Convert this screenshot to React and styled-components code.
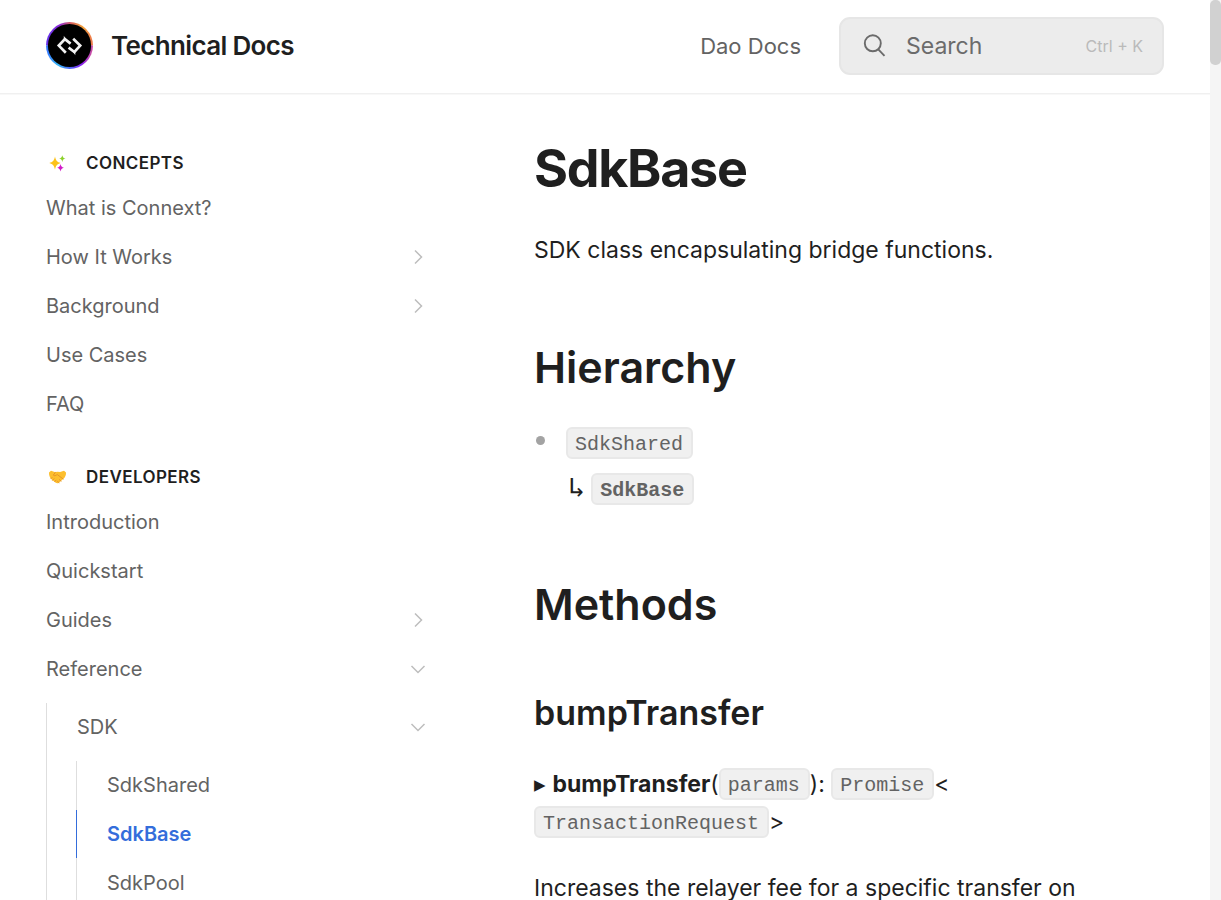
import React from "react";
import styled, { createGlobalStyle } from "styled-components";

const GlobalStyle = createGlobalStyle`
  *, *::before, *::after { box-sizing: border-box; }
  body {
    margin: 0;
    background: #fff;
    color: #1f1f1f;
    font-family: Inter, "Liberation Sans", sans-serif;
    font-size: 23px;
    line-height: 38px;
  }
  h1, h2, h3, p, ul { margin: 0; padding: 0; }
  a { color: inherit; text-decoration: none; }
`;

const Shell = styled.div`
  display: flex;
  height: 100vh;
`;

const Scroller = styled.div`
  flex: 1;
  min-width: 0;
  overflow-y: auto;
  scrollbar-width: none;
`;

const ScrollTrack = styled.div`
  width: 11px;
  background: #f5f5f5;
`;

const ScrollThumb = styled.div`
  height: 65px;
  border-radius: 5px;
  background: #d1d1d1;
`;

const Header = styled.header`
  display: flex;
  align-items: center;
  height: 94px;
  padding: 0 46px 2px;
  border-bottom: 1px solid #f0f0f0;
  box-shadow: 0 1px 0 #f8f8f8;
`;

const Brand = styled.a`
  display: flex;
  align-items: center;
  gap: 18px;
  flex: 1;
  font-size: 26px;
  font-weight: 600;
  letter-spacing: -0.025em;
`;

const LogoMark = styled.svg`
  width: 47px;
  height: 47px;
`;

const HeaderLink = styled.a`
  margin-right: 38px;
  color: #636363;
  font-size: 22px;
`;

const SearchButton = styled.button`
  display: flex;
  align-items: center;
  gap: 20px;
  width: 325px;
  height: 58px;
  padding: 0 19px 0 22px;
  border: 2px solid #e6e6e6;
  border-radius: 11px;
  background: #ececec;
  color: #6b6b6b;
  font: inherit;
  text-align: left;
`;

const SearchLabel = styled.span`
  flex: 1;
`;

const Shortcut = styled.span`
  color: #bababa;
  font-size: 16px;
`;

const Columns = styled.div`
  display: grid;
  grid-template-columns: 384px minmax(0, 1fr);
  column-gap: 104px;
  padding: 0 46px;
`;

const Sidebar = styled.nav`
  display: flex;
  flex-direction: column;
  gap: 28px;
  padding-top: 48px;
  font-size: 20px;
  line-height: 30px;
  color: #636363;
`;

const GroupTitle = styled.h2`
  display: flex;
  align-items: center;
  gap: 17px;
  height: 42px;
  padding-left: 1px;
  color: #1f1f1f;
  font-size: 17px;
  font-weight: 600;
  letter-spacing: 0.025em;
  text-transform: uppercase;
`;

const GroupIcon = styled.svg`
  width: 22px;
  height: 22px;
`;

const NavList = styled.ul`
  display: flex;
  flex-direction: column;
  gap: 1px;
  list-style: none;
`;

const SubList = styled(NavList)`
  margin-top: 10px;
  border-left: 1px solid #dedede;
`;

const NavLink = styled.a`
  display: flex;
  align-items: center;
  justify-content: space-between;
  height: 48px;
  padding-right: 3px;
  padding-left: ${(p) => (p.$nested ? 30 : 0)}px;
  margin-left: ${(p) => (p.$nested ? -1 : 0)}px;
  border-left: ${(p) => (p.$nested ? "1px solid transparent" : "none")};
  ${(p) => p.$active && "color: #346ddb; border-left-color: #346ddb; font-weight: 600;"}
`;

const NestedItem = styled.li`
  ${SubList} { margin-left: 29px; }
`;

const ChevronIcon = styled.svg`
  width: 18px;
  height: 18px;
  fill: none;
  stroke: #bdbdbd;
  stroke-width: 1.5;
  transform: ${(p) => (p.$open ? "rotate(90deg)" : "none")};
`;

const Article = styled.main`
  padding-top: 42px;
`;

const Title = styled.h1`
  font-size: 52px;
  font-weight: 700;
  line-height: 66px;
  letter-spacing: -0.025em;
`;

const Lead = styled.p`
  margin: 29px 0 69px;
`;

const SectionTitle = styled.h2`
  font-size: 43px;
  font-weight: 600;
  line-height: 58px;
`;

const MemberTitle = styled.h3`
  margin-top: 57px;
  font-size: 34px;
  font-weight: 600;
  line-height: 46px;
`;

const Tree = styled.ul`
  margin: 28px 0 67px;
  list-style: none;
`;

const TreeItem = styled.li`
  display: flex;
  gap: 20px;
`;

const Bullet = styled.span`
  width: 9px;
  height: 9px;
  margin: 12px 1px 0 2px;
  border-radius: 50%;
  background: #a3a3a3;
`;

const TreeBody = styled.div`
  display: flex;
  flex-direction: column;
  gap: 8px;
`;

const Branch = styled.span`
  margin-left: 2px;
  font-family: "DejaVu Sans Mono", monospace;
  font-size: 28px;
  line-height: 28px;
`;

const Code = styled.code`
  display: inline-block;
  padding: 3px 8px 0 7px;
  border: 2px solid #e8e8e8;
  border-radius: 6px;
  background: #f0f0f0;
  color: #636363;
  font-family: "Liberation Mono", monospace;
  font-size: 20px;
  line-height: 25px;
  vertical-align: 1px;
`;

const Signature = styled.p`
  margin-top: 29px;
`;

const Paragraph = styled.p`
  margin-top: 28px;
`;

function Chevron({ open }) {
  return (
    <ChevronIcon viewBox="0 0 18 18" $open={open} aria-hidden="true">
      <path d="M6 2.500 12.500 9 6 15.500" />
    </ChevronIcon>
  );
}

function Logo() {
  return (
    <LogoMark viewBox="0 0 47 47" aria-hidden="true">
      <defs>
        <linearGradient id="ringTop" x1="0" y1="0.4" x2="1" y2="0.5">
          <stop offset="0" stopColor="#5a35f0" />
          <stop offset="0.25" stopColor="#8d2bd8" />
          <stop offset="0.5" stopColor="#d8605a" />
          <stop offset="0.75" stopColor="#f2a23c" />
          <stop offset="1" stopColor="#ee7a4a" />
        </linearGradient>
        <linearGradient id="ringBottom" x1="0" y1="0.4" x2="1" y2="0.5">
          <stop offset="0" stopColor="#3577ff" />
          <stop offset="0.3" stopColor="#38b6f5" />
          <stop offset="0.55" stopColor="#4a6cf5" />
          <stop offset="0.8" stopColor="#8a22ee" />
          <stop offset="1" stopColor="#e0608a" />
        </linearGradient>
      </defs>
      <path d="M0 23.500a23.500 23.500 0 0 1 47 0z" fill="url(#ringTop)" />
      <path d="M0 23.500a23.500 23.500 0 0 0 47 0z" fill="url(#ringBottom)" />
      <circle cx="23.500" cy="23.500" r="21.600" fill="#000" />
      <g fill="none" stroke="#f2f2f2" strokeWidth="2.700">
        <path d="M19.800 30.800 12.800 23.600 18.900 17.100 24.600 21.600" />
        <path d="M27.200 16.800 34.200 23.600 28.400 30 22.600 25.600" />
      </g>
      <path d="M17.800 13.800v4.500l4 1.500zM29.300 33.300v-4.500l-4-1.500z" fill="#f2f2f2" />
    </LogoMark>
  );
}

function Sparkles() {
  return (
    <GroupIcon viewBox="0 0 22 22" aria-hidden="true">
      <path d="M8 4.500c.9 4 2 5.500 5.700 6.500-3.700 1-4.800 2.700-5.700 6.700-.9-4-2-5.700-5.700-6.700C6 10 7.100 8.500 8 4.500z" fill="#fcc21b" />
      <path d="M15.300 3.200c.5 2.100 1.100 2.900 3.200 3.400-2.100.5-2.700 1.300-3.200 3.400-.5-2.100-1.100-2.900-3.200-3.400 2.100-.5 2.700-1.300 3.200-3.400z" fill="#8bd12a" />
      <path d="M13.500 12.100c.6 2.200 1.200 3.100 3.400 3.700-2.200.6-2.800 1.400-3.400 3.600-.6-2.200-1.200-3-3.400-3.600 2.200-.6 2.800-1.500 3.400-3.700z" fill="#d11bc8" />
    </GroupIcon>
  );
}

function Handshake() {
  return (
    <GroupIcon viewBox="0 0 22 22" aria-hidden="true">
      <path d="M2 6.500 4 4.800l4.500 1.400 2-.5 2.600.2L17 4.800l2 1.700c.2 2.300-.6 4.600-2.500 6.300L12 16.800c-1.300.9-2.600.6-3.600-.2l-4-3.400C2.500 11.300 1.900 9 2 6.500z" fill="#fdbf2e" />
      <path d="m8.500 6.200-2.200 2.900c.8 1.200 2.600.6 3.900-.6l6 4.500M5 11.500l-1.200 1.300M7 12.700l-1.500 1.700M9 14.200l-1.300 1.500M10.500 15.400l1.500 1.200M12.300 13.700l1.800 1.400" fill="none" stroke="#e3912a" strokeWidth="0.900" strokeLinecap="round" />
    </GroupIcon>
  );
}

function SearchIcon() {
  return (
    <svg width="23" height="23" viewBox="0 0 23 23" fill="none" stroke="#6b6b6b" strokeWidth="1.900" aria-hidden="true">
      <circle cx="9.800" cy="9.300" r="8" />
      <path d="m15.300 15.300 6.200 6.500" />
    </svg>
  );
}

function NavItem({ label, chevron, nested, active, children }) {
  const Item = nested ? NestedItem : "li";
  return (
    <Item>
      <NavLink href="#" $nested={nested} $active={active} aria-current={active ? "page" : undefined}>
        {label}
        {chevron && <Chevron open={chevron === "open"} />}
      </NavLink>
      {children}
    </Item>
  );
}

export default function App() {
  return (
    <>
      <GlobalStyle />
      <Shell>
        <Scroller>
          <Header>
            <Brand href="#"><Logo />Technical Docs</Brand>
            <HeaderLink href="#">Dao Docs</HeaderLink>
            <SearchButton type="button">
              <SearchIcon />
              <SearchLabel>Search</SearchLabel>
              <Shortcut>Ctrl + K</Shortcut>
            </SearchButton>
          </Header>
          <Columns>
            <Sidebar aria-label="Documentation">
              <section>
                <GroupTitle><Sparkles />Concepts</GroupTitle>
                <NavList>
                  <NavItem label="What is Connext?" />
                  <NavItem label="How It Works" chevron="closed" />
                  <NavItem label="Background" chevron="closed" />
                  <NavItem label="Use Cases" />
                  <NavItem label="FAQ" />
                </NavList>
              </section>
              <section>
                <GroupTitle><Handshake />Developers</GroupTitle>
                <NavList>
                  <NavItem label="Introduction" />
                  <NavItem label="Quickstart" />
                  <NavItem label="Guides" chevron="closed" />
                  <NavItem label="Reference" chevron="open">
                    <SubList>
                      <NavItem nested label="SDK" chevron="open">
                        <SubList>
                          <NavItem nested label="SdkShared" />
                          <NavItem nested active label="SdkBase" />
                          <NavItem nested label="SdkPool" />
                        </SubList>
                      </NavItem>
                    </SubList>
                  </NavItem>
                </NavList>
              </section>
            </Sidebar>
            <Article>
              <Title>SdkBase</Title>
              <Lead>SDK class encapsulating bridge functions.</Lead>
              <SectionTitle>Hierarchy</SectionTitle>
              <Tree>
                <TreeItem>
                  <Bullet />
                  <TreeBody>
                    <div><Code>SdkShared</Code></div>
                    <div><Branch>↳</Branch> <Code><b>SdkBase</b></Code></div>
                  </TreeBody>
                </TreeItem>
              </Tree>
              <SectionTitle>Methods</SectionTitle>
              <MemberTitle>bumpTransfer</MemberTitle>
              <Signature>
                ▸ <b>bumpTransfer</b>(<Code>params</Code>): <Code>Promise</Code>&lt;
                <br />
                <Code>TransactionRequest</Code>&gt;
              </Signature>
              <Paragraph>Increases the relayer fee for a specific transfer on</Paragraph>
            </Article>
          </Columns>
        </Scroller>
        <ScrollTrack aria-hidden="true"><ScrollThumb /></ScrollTrack>
      </Shell>
    </>
  );
}
